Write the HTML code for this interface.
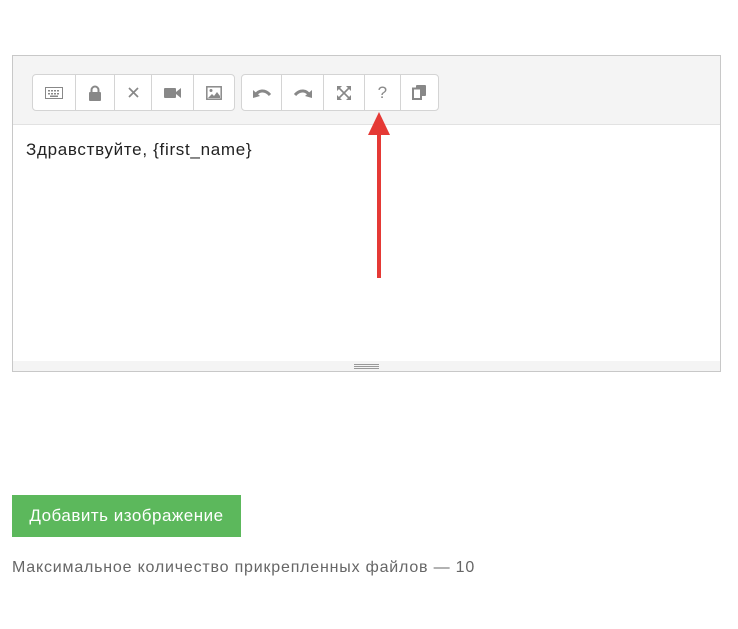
<!DOCTYPE html>
<html><head><meta charset="utf-8"><style>
body{margin:0;background:#fff;width:738px;height:629px;position:relative;font-family:"Liberation Sans",sans-serif;overflow:hidden}
.ed{position:absolute;left:12px;top:55px;width:707px;height:315px;border:1px solid #c8c8c8}
.tb{position:absolute;left:0;top:0;right:0;height:68px;background:#f4f4f4;border-bottom:1px solid #e2e2e2}
.grp{position:absolute;top:18px;height:35px;border:1px solid #d4d4d4;border-radius:4px;background:#fff;display:flex}
.b{height:35px;border-right:1px solid #d4d4d4;display:flex;align-items:center;justify-content:center;color:#8a8a8a}
.b:last-child{border-right:none}
.txt{position:absolute;left:13px;top:84px;font-size:17px;letter-spacing:0.7px;color:#222}
.rz{position:absolute;left:0;right:0;bottom:0;height:10px;background:#f4f4f4}
.rz i{position:absolute;left:341px;top:3px;width:25px;height:1px;background:#999;box-shadow:0 2px 0 #999,0 4px 0 #999}
.btn{position:absolute;left:12px;top:495px;width:229px;height:42px;background:#5cb85c;color:#fff;font-size:17px;letter-spacing:0.5px;line-height:42px;text-align:center}
.note{position:absolute;left:12px;top:559px;font-size:16px;letter-spacing:0.8px;color:#666}
</style></head><body>
<div class="ed">
<div class="tb">
<div class="grp" style="left:19px;width:201px">
<div class="b" style="width:42px"><svg width="18" height="12"><rect x=".5" y=".5" width="17" height="11" fill="none" stroke="#888"/><g fill="#888"><rect x="3" y="3" width="2" height="1.5"/><rect x="6" y="3" width="2" height="1.5"/><rect x="9" y="3" width="2" height="1.5"/><rect x="12" y="3" width="2" height="1.5"/><rect x="3" y="6" width="2" height="1.5"/><rect x="6" y="6" width="2" height="1.5"/><rect x="9" y="6" width="2" height="1.5"/><rect x="12" y="6" width="2" height="1.5"/><rect x="5" y="8.5" width="8" height="1.5"/></g></svg></div>
<div class="b" style="width:38px"><svg width="14" height="16"><path d="M3.5 7V5a3.5 3.5 0 0 1 7 0v2" fill="none" stroke="#888" stroke-width="2"/><rect x="1" y="7" width="12" height="9" rx="1" fill="#888"/></svg></div>
<div class="b" style="width:36px"><svg width="11" height="11"><path d="M1 1L10 10M10 1L1 10" stroke="#888" stroke-width="1.7"/></svg></div>
<div class="b" style="width:41px"><svg width="18" height="12"><rect x="0" y="1" width="12" height="10" rx="1" fill="#888"/><path d="M12 5L17 1V11L12 7Z" fill="#888"/></svg></div>
<div class="b" style="width:40px"><svg width="16" height="14"><rect x=".8" y=".8" width="14.4" height="12.4" fill="none" stroke="#888" stroke-width="1.5"/><circle cx="5" cy="4.5" r="1.5" fill="#888"/><path d="M2 12L6 8L8 10L11 6L14 10V12Z" fill="#888"/></svg></div>
</div>
<div class="grp" style="left:228px;width:196px">
<div class="b" style="width:40px"><svg width="18" height="12"><path d="M2 9C5 3 12 2 17 8" fill="none" stroke="#888" stroke-width="3"/><path d="M0 3L7 9L0 11Z" fill="#888"/></svg></div>
<div class="b" style="width:41px"><svg width="18" height="12"><path d="M16 9C13 3 6 2 1 8" fill="none" stroke="#888" stroke-width="3"/><path d="M18 3L11 9L18 11Z" fill="#888"/></svg></div>
<div class="b" style="width:41px"><svg width="14" height="14"><path d="M1 1L13 13M13 1L1 13" stroke="#888" stroke-width="1.6"/><path d="M0 0H5L0 5ZM14 0V5L9 0ZM0 14V9L5 14ZM14 14H9L14 9Z" fill="#888"/></svg></div>
<div class="b" style="width:35px;font-size:17px">?</div>
<div class="b" style="width:38px"><svg width="14" height="15"><rect x="4" y="0" width="10" height="11" rx="1" fill="#888"/><rect x="1" y="3.5" width="8" height="10.5" fill="#fff" stroke="#888" stroke-width="2"/></svg></div>
</div>
</div>
<div class="txt">Здравствуйте, {first_name}</div>
<div class="rz"><i></i></div>
</div>
<svg style="position:absolute;left:360px;top:108px" width="40" height="175"><path d="M19 22V170" stroke="#e53935" stroke-width="4"/><path d="M19 4L30 27H8Z" fill="#e53935"/></svg>
<div class="btn">Добавить изображение</div>
<div class="note">Максимальное количество прикрепленных файлов — 10</div>
</body></html>
